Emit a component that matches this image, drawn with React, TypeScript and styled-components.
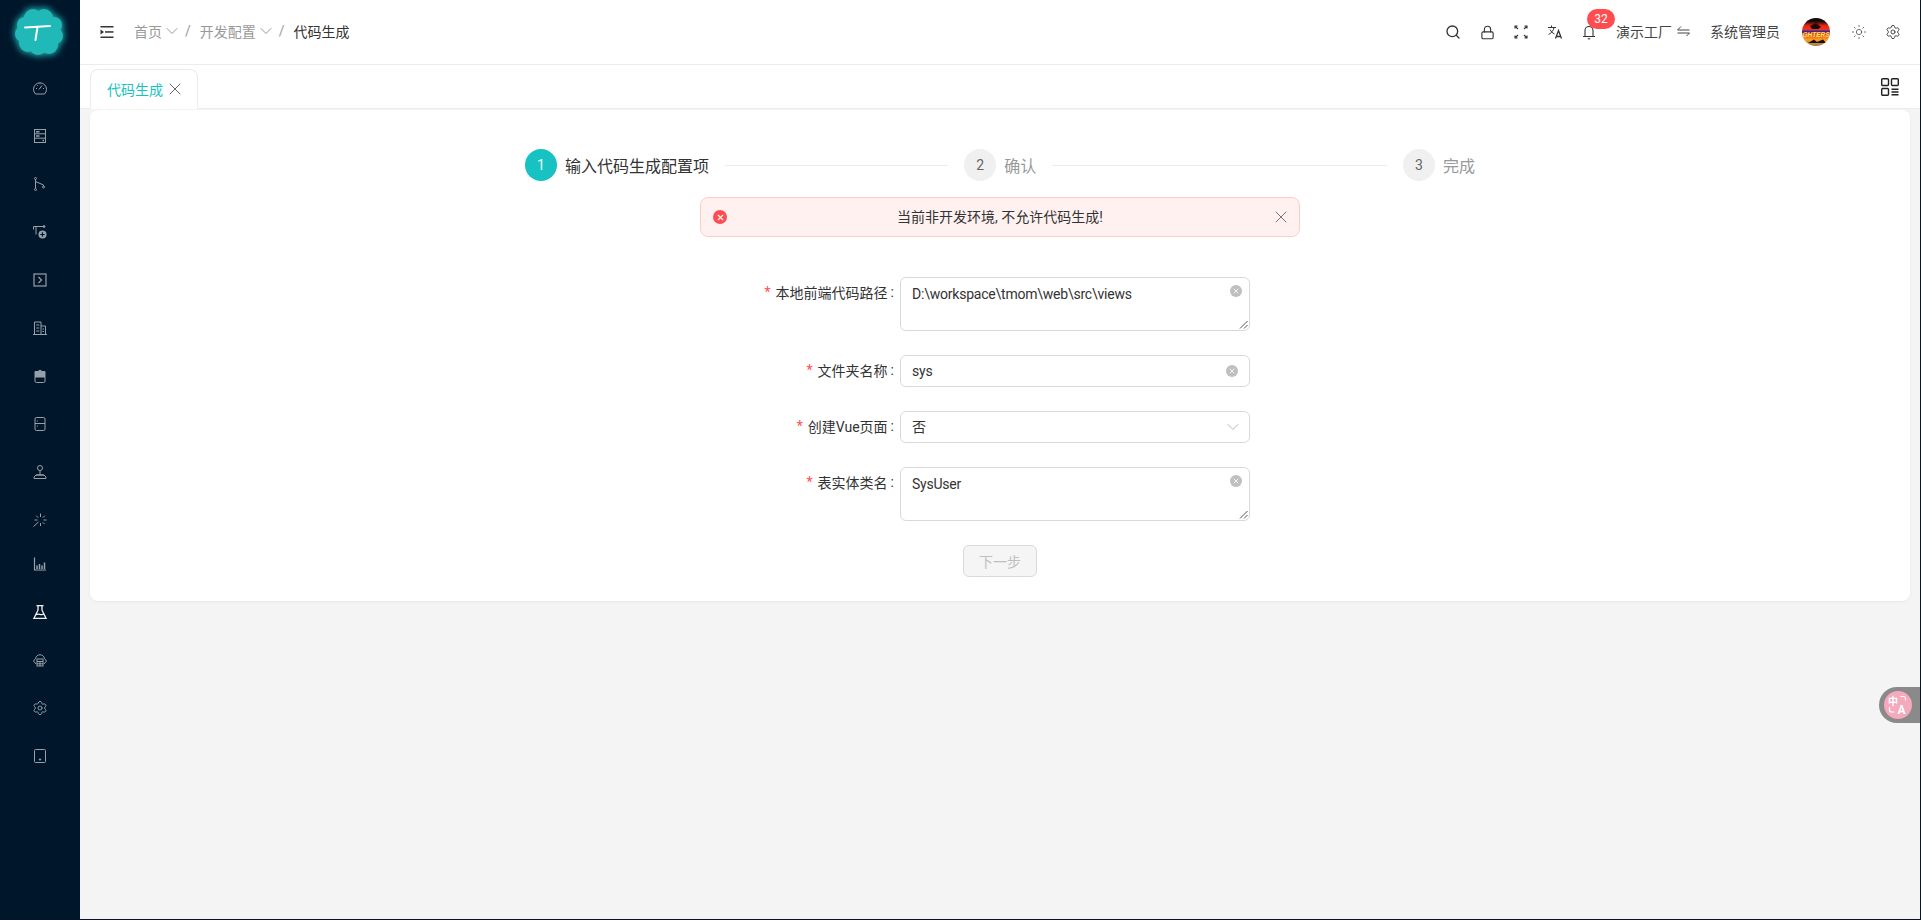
import React from 'react'
import styled, { createGlobalStyle } from 'styled-components'
import { ChevronDown, Lock, Search, Settings, Sun, X } from 'lucide-react'

const GlobalStyle = createGlobalStyle`
  html, body, #root {
    margin: 0;
    height: 100%;
    overflow: hidden;
  }
  body {
    font-family: Roboto, 'Noto Sans CJK SC', sans-serif;
    font-size: 14px;
    color: #333;
    background: #f4f4f4;
  }
  * {
    box-sizing: border-box;
  }
`

const Page = styled.div`
  display: flex;
  height: 920px;
  width: 1921px;
  border-right: 1px solid #0a1420;
  border-bottom: 1px solid #0a1420;
`
const Sider = styled.aside`
  width: 80px;
  flex: none;
  background: #00162b;
  display: flex;
  flex-direction: column;
  align-items: center;
`
const LogoBox = styled.div`
  height: 64px;
  width: 80px;
  display: flex;
  align-items: center;
  justify-content: center;
`
const LogoSvg = styled.svg`
  overflow: visible;
`
const NavList = styled.nav`
  display: flex;
  flex-direction: column;
`
const NavItem = styled.div<{ $active?: boolean; $lift?: boolean }>`
  width: 48px;
  height: 48px;
  display: flex;
  align-items: center;
  justify-content: center;
  color: ${(p) => (p.$active ? '#f0f3f5' : '#97a1ab')};
  margin-top: ${(p) => (p.$lift ? '-4px' : '0')};
`
const Main = styled.div`
  flex: 1;
  min-width: 0;
  display: flex;
  flex-direction: column;
`
const Header = styled.header`
  height: 65px;
  flex: none;
  background: #fff;
  border-bottom: 1px solid #ececec;
  display: flex;
  align-items: center;
  padding: 0 10px 0 20px;
`
const Trail = styled.div`
  display: flex;
  align-items: center;
  margin-left: 20px;
  flex: 1;
`
const Crumb = styled.span<{ $current?: boolean }>`
  display: flex;
  align-items: center;
  padding-bottom: 2px;
  color: ${(p) => (p.$current ? '#333' : '#999')};
`
const Slash = styled.span`
  color: #999;
  margin: 0 9px 2px 3px;
`
const ToolIcon = styled.div<{ $gap?: number }>`
  width: 34px;
  height: 34px;
  margin-left: ${(p) => p.$gap ?? 0}px;
  display: flex;
  align-items: center;
  justify-content: center;
  color: #333;
  position: relative;
`
const Badge = styled.span`
  position: absolute;
  left: 15px;
  top: -6px;
  height: 20px;
  width: 28px;
  border-radius: 10px;
  background: #ff4d4f;
  color: #fff;
  font-size: 12px;
  line-height: 20px;
  text-align: center;
`
const HeaderText = styled.span<{ $left: number; $right?: number }>`
  color: #444;
  white-space: nowrap;
  display: flex;
  align-items: center;
  gap: 5px;
  padding-bottom: 2px;
  margin-left: ${(p) => p.$left}px;
  margin-right: ${(p) => p.$right ?? 0}px;
`
const TabBar = styled.div`
  height: 44px;
  flex: none;
  background: #fff;
  border-bottom: 1px solid #ececec;
  display: flex;
  align-items: flex-end;
  justify-content: space-between;
  padding: 0 20px 0 10px;
`
const Tab = styled.div`
  width: 108px;
  height: 40px;
  margin-bottom: -1px;
  background: #fff;
  border: 1px solid #ececec;
  border-bottom-color: #fff;
  border-radius: 8px 8px 0 0;
  display: flex;
  align-items: center;
  gap: 2px;
  padding-left: 16px;
  color: #16c2c2;
`
const TabTool = styled.div`
  align-self: center;
  display: flex;
  color: #222;
`
const Content = styled.main`
  flex: 1;
  padding: 1px 10px 0 10px;
`
const Card = styled.section`
  height: 491px;
  background: #fff;
  border-radius: 8px;
  box-shadow: 0 1px 3px rgba(0, 0, 0, 0.05);
  padding-top: 39px;
  display: flex;
  flex-direction: column;
  align-items: center;
`
const Steps = styled.div`
  width: 950px;
  display: flex;
  align-items: center;
`
const Step = styled.div`
  display: flex;
  align-items: center;
  gap: 8px;
  flex: none;
`
const StepDot = styled.span<{ $active?: boolean }>`
  width: 32px;
  height: 32px;
  border-radius: 50%;
  display: flex;
  align-items: center;
  justify-content: center;
  background: ${(p) => (p.$active ? '#16c2c2' : '#f0f0f0')};
  color: ${(p) => (p.$active ? '#fff' : '#666')};
`
const StepLabel = styled.span<{ $active?: boolean }>`
  font-size: 16px;
  color: ${(p) => (p.$active ? '#333' : '#999')};
`
const StepLine = styled.span<{ $grow: number }>`
  flex: ${(p) => p.$grow} 1 0;
  height: 1px;
  background: #ececec;
  margin: 0 16px;
`
const Alert = styled.div`
  width: 600px;
  height: 40px;
  margin-top: 16px;
  background: #fff1f0;
  border: 1px solid #ffccc7;
  border-radius: 8px;
  display: flex;
  align-items: center;
  padding: 0 8px 0 12px;
  color: #333;
`
const AlertDot = styled.span`
  width: 14px;
  height: 14px;
  border-radius: 50%;
  background: #ff4d4f;
  color: #fff;
  display: flex;
  align-items: center;
  justify-content: center;
  flex: none;
`
const AlertText = styled.span`
  flex: 1;
  text-align: center;
  padding: 0 0 2px 2px;
`
const AlertClose = styled.span`
  display: flex;
  color: #777;
`
const Form = styled.form`
  width: 700px;
  margin-top: 40px;
  margin-right: 200px;
  display: flex;
  flex-direction: column;
  gap: 24px;
`
const Row = styled.div`
  display: flex;
  align-items: flex-start;
`
const Label = styled.label`
  width: 350px;
  flex: none;
  height: 32px;
  display: flex;
  align-items: center;
  justify-content: flex-end;
  padding: 0 6px 2px 0;
  color: #333;
  &::before {
    content: '*';
    color: #ff4d4f;
    margin-right: 5px;
  }
  &::after {
    content: ':';
    margin-left: 3px;
  }
`
const Field = styled.div<{ $tall?: boolean }>`
  width: 350px;
  height: ${(p) => (p.$tall ? '54px' : '32px')};
  border: 1px solid #d9d9d9;
  border-radius: 6px;
  background: #fff;
  padding: ${(p) => (p.$tall ? '5px 11px' : '0 11px')};
  display: flex;
  align-items: ${(p) => (p.$tall ? 'flex-start' : 'center')};
  justify-content: space-between;
  line-height: 22px;
  letter-spacing: -0.22px;
  color: #333;
  position: relative;
`
const ClearDot = styled.span<{ $tall?: boolean }>`
  width: 12px;
  height: 12px;
  border-radius: 50%;
  background: #bfbfbf;
  color: #fff;
  display: flex;
  align-items: center;
  justify-content: center;
  flex: none;
  margin-top: ${(p) => (p.$tall ? '2px' : '0')};
  margin-right: ${(p) => (p.$tall ? '-4px' : '0')};
`
const SelectArrow = styled.span`
  display: flex;
  color: #aaa;
  margin-right: -5px;
`
const Grip = styled.svg`
  position: absolute;
  right: 1px;
  bottom: 1px;
`
const Actions = styled.div`
  display: flex;
  justify-content: center;
  margin-left: 200px;
`
const NextButton = styled.button`
  width: 74px;
  height: 32px;
  font: inherit;
  color: #bfbfbf;
  background: #f5f5f5;
  border: 1px solid #d9d9d9;
  border-radius: 6px;
`
const Floater = styled.div`
  position: fixed;
  right: 1px;
  top: 687px;
  width: 41px;
  height: 36px;
  background: #8a8a8a;
  border-radius: 18px 0 0 18px;
  display: flex;
  align-items: center;
  padding-left: 5px;
`
const FloaterDot = styled.div`
  width: 28px;
  height: 28px;
  border-radius: 50%;
  background: #f4a9bd;
  display: flex;
  align-items: center;
  justify-content: center;
`

const blob = [
  [36, 18, 9],
  [46, 25, 8],
  [47, 36, 8],
  [41, 45, 9],
  [30, 46, 9],
  [20, 43, 9],
  [15, 34, 8],
  [17, 25, 8],
  [25, 18, 9],
  [31, 32, 16],
]

const Logo = () => (
  <LogoSvg width="64" height="64" viewBox="0 0 64 64">
    <defs>
      <filter id="glow" x="-40%" y="-40%" width="180%" height="180%">
        <feGaussianBlur stdDeviation="3.5" />
      </filter>
    </defs>
    <g fill="#2ee6e0" opacity="0.8" filter="url(#glow)">
      {blob.map(([cx, cy, r]) => (
        <circle key={`${cx}-${cy}`} cx={cx} cy={cy} r={r + 1} />
      ))}
    </g>
    <g fill="#21b8b8">
      {blob.map(([cx, cy, r]) => (
        <circle key={`${cx}-${cy}`} cx={cx} cy={cy} r={r} />
      ))}
    </g>
    <path d="M17 27.500 L42 26 M29.500 27 C29 31 28 36 27.500 40" stroke="#fff" strokeWidth="2" fill="none" strokeLinecap="round" />
  </LogoSvg>
)

const line = { fill: 'none', stroke: 'currentColor', strokeWidth: 1 }

const navIcons: React.ReactNode[] = [
  <g {...line}>
    <path d="M2.500 13a6.500 6.500 0 1 1 9 0Z" />
    <path d="M6 8.500L9 4.500M3 7.500h1M10 7.500h1M4.300 4.300l.7.7M7 2.300v1" />
  </g>,
  <g {...line}>
    <rect x="1.500" y="0.500" width="11" height="13" />
    <path d="M1.500 4.800h11M1.500 9.200h11" />
    <path d="M3 2.700h3.500M3 7h3.500M9.500 11.500h1.500" strokeWidth={1.400} />
  </g>,
  <g {...line}>
    <circle cx="2.500" cy="1.500" r="1" />
    <circle cx="2.500" cy="12.500" r="1" />
    <circle cx="10.500" cy="10" r="1" />
    <path d="M2.500 2.500v9M2.500 4.500l8 3.500v1" />
  </g>,
  <g {...line}>
    <path d="M0.500 4.500V1.500h10M3 1.500v8" />
    <circle cx="11" cy="1.500" r="0.900" fill="currentColor" />
    <circle cx="9.500" cy="9.500" r="4" fill="currentColor" stroke="none" />
    <path d="M9.500 7.300v4.400M7.300 9.500h4.400" stroke="#00162b" strokeWidth={1.200} />
  </g>,
  <g {...line} strokeWidth={1.200}>
    <rect x="1" y="1" width="12" height="12" />
    <path d="M5.500 4l3 3-3 3" />
  </g>,
  <g {...line}>
    <path d="M0 13.500h14M1.500 13.500V1h6.500v12.500M8 5h4.500v8.500" />
    <path d="M3.300 4h3M3.300 7h3M3.300 10h3M9.500 8h1.500M9.500 10.500h1.500" />
  </g>,
  <g {...line}>
    <path d="M2 8h10v4a1.500 1.500 0 0 1-1.500 1.500h-7A1.500 1.500 0 0 1 2 12Z" />
    <path d="M2 2.500h3L7 1l2 1.500h3v4.500H2Z" fill="currentColor" />
    <path d="M1.500 7.500h11" />
  </g>,
  <g {...line}>
    <rect x="2" y="0.500" width="10" height="13" rx="1.500" />
    <path d="M2 6.500h10M4.300 3.500v1M4.300 8.500v1" />
  </g>,
  <g {...line}>
    <circle cx="7" cy="3" r="2.500" />
    <path d="M7 5.500v4.500M3 10h8M1 13.500h12v-1.500l-2-2H3L1 12Z" />
  </g>,
  <g {...line}>
    <path d="M7.500 0.500v3.500M10.500 7h3M1.500 7h3M7.500 10v3M9.800 4.700l2-2M5.200 4.700l-2-2M9.800 9.300l1.800 1.800M5.500 9L0.500 13.500" />
  </g>,
  <g {...line}>
    <path d="M1.500 0.500v12.500h11.500" strokeWidth={1.200} />
    <path d="M4 8.500v3.500M6.500 7v5M9 8.500v3.500M11.500 5.500v6.500" strokeWidth={1.500} />
  </g>,
  <g {...line} strokeWidth={1.300}>
    <path d="M3.500 0.700h7M5 0.700v4.500L1 13.300h12L9 5.200V0.700" />
    <path d="M3 9.800c2.500-2 5 1 8-0.800" />
  </g>,
  <g {...line}>
    <path d="M3 11L0.500 8l2-2.500C3.500 0.500 10.500 0.500 11.500 5.500l2 2.500L11 11" />
    <rect x="4" y="6" width="6" height="7" />
    <path d="M4 8.500h6M4 10.800h6M7 8.500V13" />
  </g>,
  <Settings x={-1} y={-1} size={16} strokeWidth={1.400} />,
  <g {...line}>
    <rect x="1.500" y="0.500" width="11" height="13" rx="1" />
    <circle cx="7" cy="10.500" r="0.700" fill="currentColor" />
  </g>,
]

const NavIcon = ({ index }: { index: number }) => (
  <svg width="14" height="14" viewBox="0 0 14 14">
    {navIcons[index]}
  </svg>
)

const MenuFold = () => (
  <svg width="14" height="14" viewBox="0 0 14 14" fill="#333">
    <rect x="0.500" y="1" width="13" height="1.500" />
    <rect x="5" y="6.200" width="8.500" height="1.500" />
    <rect x="0.500" y="11.500" width="13" height="1.500" />
    <path d="M0.500 4.500l3.500 2.500-3.500 2.500Z" />
  </svg>
)

const Expand = () => (
  <svg width="14" height="14" viewBox="0 0 14 14" fill="none" stroke="currentColor" strokeWidth="1.100">
    <path d="M1 3.500V1h2.500M1 1l3 3M13 3.500V1h-2.500M13 1l-3 3M1 10.500V13h2.500M1 13l3-3M13 10.500V13h-2.500M13 13l-3-3" />
  </svg>
)

const Translate = () => (
  <svg width="16" height="16" viewBox="0 0 16 16" fill="none" stroke="currentColor" strokeWidth="1">
    <path d="M1 3.500h8M4.500 1.500v2M7 3.500c-.5 3-2.500 5.500-5.500 7M3 5.500c1 2 2.500 3.500 4.500 4.500" />
    <path d="M8.500 14.500l3-8 3 8M9.500 12.500h4" strokeWidth="1.300" />
  </svg>
)

const Bell = () => (
  <svg width="14" height="16" viewBox="0 0 14 16" fill="none" stroke="currentColor" strokeWidth="1.100">
    <path d="M3 12.500V6.500a4 4 0 0 1 8 0v6M1 12.500h12" />
    <path d="M5.800 14.800h2.400" />
  </svg>
)

const Swap = () => (
  <svg width="13" height="12" viewBox="0 0 13 12" fill="none" stroke="#444" strokeWidth="1">
    <path d="M0.500 5h12M0.500 5l3.500-3.500M12.500 8H0.500M12.500 8l-3 3" />
  </svg>
)

const Avatar = () => (
  <svg width="28" height="28" viewBox="0 0 28 28">
    <defs>
      <linearGradient id="sky" x1="0" y1="0" x2="0" y2="1">
        <stop offset="0" stopColor="#0c0a0c" />
        <stop offset="0.12" stopColor="#1a0806" />
        <stop offset="0.28" stopColor="#e8281a" />
        <stop offset="0.55" stopColor="#e8401e" />
        <stop offset="0.78" stopColor="#f8a020" />
        <stop offset="1" stopColor="#9a7a50" />
      </linearGradient>
      <clipPath id="disc">
        <circle cx="14" cy="14" r="14" />
      </clipPath>
    </defs>
    <g clipPath="url(#disc)">
      <rect width="28" height="28" fill="url(#sky)" />
      <path d="M8 8 L14 5 L19 9 L16 11 L10 11Z" fill="#1c0806" />
      <path d="M6 25 L12 21.500 L15 24 L21 21.500 L24 25Z" fill="#1c0d08" />
      <rect x="0" y="12.500" width="28" height="2.500" fill="#3a2a90" />
      <text x="14" y="18.500" textAnchor="middle" fontSize="6.500" fontWeight="700" fontStyle="italic" fill="#ffe060" fontFamily="Liberation Sans, sans-serif">GHTERS</text>
    </g>
  </svg>
)

const AppsIcon = () => (
  <svg width="20" height="20" viewBox="0 0 20 20" fill="none" stroke="currentColor" strokeWidth="1.400">
    <rect x="1.700" y="1.700" width="6.800" height="6.800" rx="1" />
    <rect x="11.500" y="1.700" width="6.800" height="6.800" rx="1" />
    <rect x="1.700" y="11.500" width="6.800" height="6.800" rx="1" />
    <path d="M11.500 12.200h7M11.500 15h7M11.500 17.800h7" />
  </svg>
)

const Grabber = () => (
  <Grip width="9" height="9" viewBox="0 0 9 9" stroke="#555" strokeWidth="1">
    <path d="M1 8.500L8.500 1M5 8.500L8.500 5" />
  </Grip>
)

const Translator = () => (
  <svg width="22" height="22" viewBox="0 0 22 22" fill="none" stroke="#fff" strokeWidth="1.200">
    <text x="1" y="10.500" fontSize="10" fontWeight="700" fill="#fff" stroke="none" fontFamily="Noto Sans CJK SC, sans-serif">中</text>
    <path d="M13.500 2.500h3a2 2 0 0 1 2 2v2M2.500 13v3a2 2 0 0 0 2 2h3" />
    <text x="10.500" y="20" fontSize="12" fontWeight="700" fill="#fff" stroke="none" fontFamily="Roboto, sans-serif">A</text>
  </svg>
)

const fields = [
  { label: '本地前端代码路径', value: 'D:\\workspace\\tmom\\web\\src\\views', kind: 'area' },
  { label: '文件夹名称', value: 'sys', kind: 'input' },
  { label: '创建Vue页面', value: '否', kind: 'select' },
  { label: '表实体类名', value: 'SysUser', kind: 'area' },
]

export default function App() {
  return (
    <Page>
      <GlobalStyle />
      <Sider>
        <LogoBox>
          <Logo />
        </LogoBox>
        <NavList>
          {navIcons.map((_, i) => (
            <NavItem key={i} $active={i === 11} $lift={i === 10}>
              <NavIcon index={i} />
            </NavItem>
          ))}
        </NavList>
      </Sider>
      <Main>
        <Header>
          <MenuFold />
          <Trail>
            <Crumb>
              首页
              <ChevronDown size={20} strokeWidth={1.200} />
            </Crumb>
            <Slash>/</Slash>
            <Crumb>
              开发配置
              <ChevronDown size={20} strokeWidth={1.200} />
            </Crumb>
            <Slash>/</Slash>
            <Crumb $current>代码生成</Crumb>
          </Trail>
          <ToolIcon>
            <Search size={16} strokeWidth={2} />
          </ToolIcon>
          <ToolIcon>
            <Lock size={15} strokeWidth={1.800} />
          </ToolIcon>
          <ToolIcon>
            <Expand />
          </ToolIcon>
          <ToolIcon>
            <Translate />
          </ToolIcon>
          <ToolIcon>
            <Bell />
            <Badge>32</Badge>
          </ToolIcon>
          <HeaderText $left={10}>
            演示工厂
            <Swap />
          </HeaderText>
          <HeaderText $left={20} $right={22}>
            系统管理员
          </HeaderText>
          <Avatar />
          <ToolIcon $gap={12}>
            <Sun size={16} strokeWidth={1} />
          </ToolIcon>
          <ToolIcon>
            <Settings size={16} strokeWidth={1.300} />
          </ToolIcon>
        </Header>
        <TabBar>
          <Tab>
            代码生成
            <X size={20} strokeWidth={1.200} color="#666" />
          </Tab>
          <TabTool>
            <AppsIcon />
          </TabTool>
        </TabBar>
        <Content>
          <Card>
            <Steps>
              <Step>
                <StepDot $active>1</StepDot>
                <StepLabel $active>输入代码生成配置项</StepLabel>
              </Step>
              <StepLine $grow={1} />
              <Step>
                <StepDot>2</StepDot>
                <StepLabel>确认</StepLabel>
              </Step>
              <StepLine $grow={1.500} />
              <Step>
                <StepDot>3</StepDot>
                <StepLabel>完成</StepLabel>
              </Step>
            </Steps>
            <Alert>
              <AlertDot>
                <X size={9} strokeWidth={3} />
              </AlertDot>
              <AlertText>当前非开发环境, 不允许代码生成!</AlertText>
              <AlertClose>
                <X size={20} strokeWidth={1.200} />
              </AlertClose>
            </Alert>
            <Form>
              {fields.map((f) => (
                <Row key={f.label}>
                  <Label>{f.label}</Label>
                  <Field $tall={f.kind === 'area'}>
                    {f.value}
                    {f.kind === 'select' ? (
                      <SelectArrow>
                        <ChevronDown size={20} strokeWidth={1} />
                      </SelectArrow>
                    ) : (
                      <ClearDot $tall={f.kind === 'area'}>
                        <X size={8} strokeWidth={2.500} />
                      </ClearDot>
                    )}
                    {f.kind === 'area' && <Grabber />}
                  </Field>
                </Row>
              ))}
              <Actions>
                <NextButton type="button">下一步</NextButton>
              </Actions>
            </Form>
          </Card>
        </Content>
      </Main>
      <Floater>
        <FloaterDot>
          <Translator />
        </FloaterDot>
      </Floater>
    </Page>
  )
}
